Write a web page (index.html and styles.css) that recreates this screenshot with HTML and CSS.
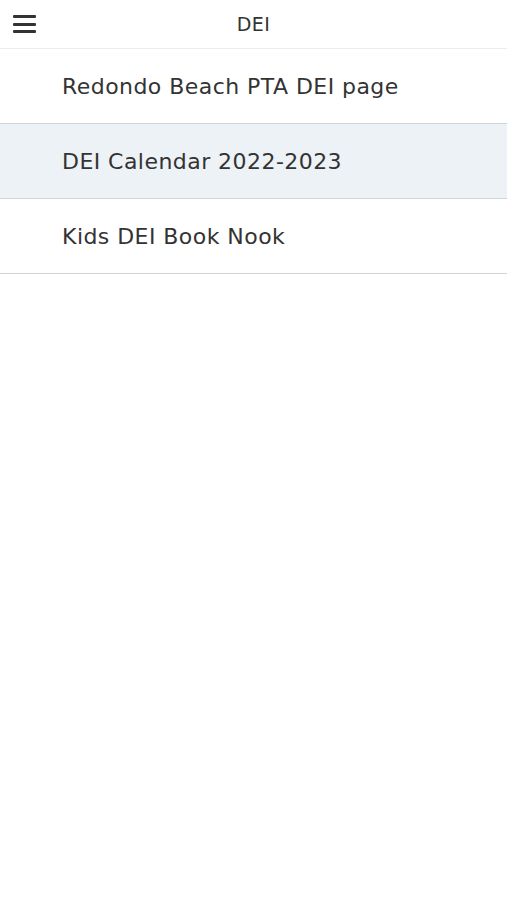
FILE: index.html
```html
<!DOCTYPE html>
<html>
<head>
<title>DEI</title>
<link rel="stylesheet" href="styles.css">
</head>
<body>

<div id="topbar">
	<span class="menu"><i></i><i></i><i></i></span>
	<span class="title">DEI</span>
</div>

<ul id="links">
	<li>Redondo Beach PTA DEI page</li>
	<li class="active">DEI Calendar 2022-2023</li>
	<li>Kids DEI Book Nook</li>
</ul>

</body>
</html>
```

FILE: styles.css
```css
body {
	margin: 0;
	font-family: "DejaVu Sans", sans-serif;
	color: #333;
	background: #fff;
}

#topbar {
	height: 48px;
	display: flex;
	align-items: center;
	justify-content: center;
	position: relative;
	border-bottom: 1px solid #ececec;
}

.title {
	font-size: 19px;
	letter-spacing: 0.5px;
}

.menu {
	position: absolute;
	left: 13px;
	top: 15px;
	width: 23px;
	display: flex;
	flex-direction: column;
	gap: 4.5px;
}

.menu i {
	display: block;
	height: 3px;
	background: #333;
	border-radius: 1px;
}

#links {
	list-style: none;
	margin: 0;
	padding: 0;
}

#links li {
	height: 74px;
	line-height: 75px;
	padding-left: 62px;
	font-size: 22px;
	letter-spacing: 0.45px;
	border-bottom: 1px solid #d2d2d2;
}

#links li.active {
	background-color: #edf2f7;
}
```
